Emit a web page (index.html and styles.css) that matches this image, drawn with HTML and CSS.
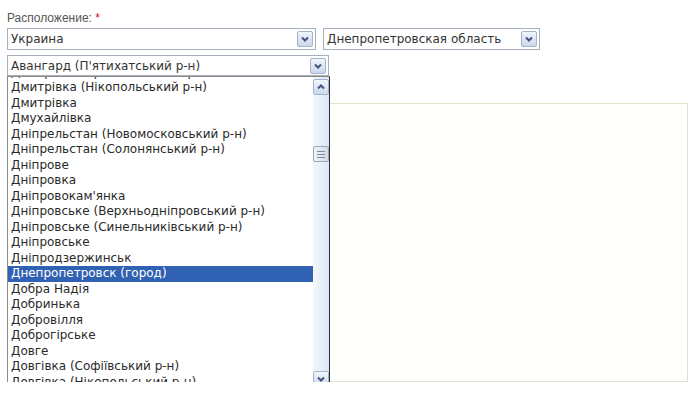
FILE: index.html
```html
<!DOCTYPE html>
<html lang="ru">

<head>
    <meta charset="UTF-8">
    <meta name="viewport" content="width=device-width, initial-scale=1.0">
    <title>Расположение</title>
    <link rel="stylesheet" href="styles.css">
</head>

<body>
    <div class="form">
        <div class="label">Расположение: <span class="req">*</span></div>
        <div class="row">
            <div class="combo combo-country">
                <span class="combo-text">Украина</span>
                <span class="arrow"><svg viewBox="0 0 14 14"><path d="M4 5.5 L7 8.5 L10 5.5" /></svg></span>
            </div>
            <div class="combo combo-region">
                <span class="combo-text">Днепропетровская область</span>
                <span class="arrow"><svg viewBox="0 0 14 14"><path d="M4 5.5 L7 8.5 L10 5.5" /></svg></span>
            </div>
        </div>
        <div class="combo combo-city">
            <span class="combo-text">Авангард (П'ятихатський р-н)</span>
            <span class="arrow"><svg viewBox="0 0 14 14"><path d="M4 5.5 L7 8.5 L10 5.5" /></svg></span>
        </div>
        <div class="area">
            <div class="map-box"></div>
            <div class="dropdown">
                <div class="items">
                    <div class="items-inner">
                        <div class="item">Дмитрівка (Криничанський р-н)</div>
                        <div class="item">Дмитрівка (Нікопольський р-н)</div>
                        <div class="item">Дмитрівка</div>
                        <div class="item">Дмухайлівка</div>
                        <div class="item">Дніпрельстан (Новомосковський р-н)</div>
                        <div class="item">Дніпрельстан (Солонянський р-н)</div>
                        <div class="item">Дніпрове</div>
                        <div class="item">Дніпровка</div>
                        <div class="item">Дніпровокам'янка</div>
                        <div class="item">Дніпровське (Верхньодніпровський р-н)</div>
                        <div class="item">Дніпровське (Синельниківський р-н)</div>
                        <div class="item">Дніпровське</div>
                        <div class="item">Дніпродзержинськ</div>
                        <div class="item selected">Днепропетровск (город)</div>
                        <div class="item">Добра Надія</div>
                        <div class="item">Добринька</div>
                        <div class="item">Добровілля</div>
                        <div class="item">Доброгірське</div>
                        <div class="item">Довге</div>
                        <div class="item">Довгівка (Софіївський р-н)</div>
                        <div class="item">Довгівка (Нікопольський р-н)</div>
                    </div>
                </div>
                <div class="scrollbar">
                    <span class="sbtn"><svg viewBox="0 0 14 14"><path d="M4 8.5 L7 5.5 L10 8.5" /></svg></span>
                    <div class="track">
                        <span class="thumb"><i></i><i></i><i></i></span>
                    </div>
                    <span class="sbtn"><svg viewBox="0 0 14 14"><path d="M4 5.5 L7 8.5 L10 5.5" /></svg></span>
                </div>
            </div>
        </div>
    </div>
</body>

</html>
```

FILE: styles.css
```css
* {
    box-sizing: border-box;
}

body {
    margin: 0;
    padding: 0;
    background-color: #ffffff;
    font-family: "DejaVu Sans", Verdana, sans-serif;
    font-size: 12px;
    color: #333333;
}

.form {
    padding: 11px 0 0 7px;
}

.label {
    font-family: "Liberation Sans", Arial, sans-serif;
    font-size: 12px;
    line-height: 14px;
    height: 14px;
    margin-bottom: 3px;
    color: #555555;
}

.req {
    color: #d01010;
}

.row {
    display: flex;
    gap: 7px;
    margin-bottom: 5px;
}

.combo {
    display: flex;
    align-items: center;
    justify-content: space-between;
    height: 22px;
    padding: 0 2px 0 3px;
    border: 1px solid #a7b1bd;
    background: #ffffff;
}

.combo-country {
    width: 309px;
}

.combo-region {
    width: 217px;
}

.combo-city {
    width: 322px;
    height: 21px;
}

.combo-text {
    white-space: nowrap;
}

.arrow,
.sbtn {
    display: flex;
    align-items: center;
    justify-content: center;
    width: 16px;
    height: 16px;
    border: 1px solid #a3b3cc;
    border-radius: 2px;
    background: linear-gradient(180deg, #f2f6fc, #c9d7ee);
}

.arrow svg,
.sbtn svg {
    width: 14px;
    height: 14px;
}

.arrow path,
.sbtn path {
    fill: none;
    stroke: #44557a;
    stroke-width: 2;
}

.area {
    position: relative;
    padding-top: 27px;
}

.map-box {
    margin-left: 313px;
    width: 368px;
    height: 279px;
    border: 1px solid #e2e2cc;
    background: #fffffd;
}

.dropdown {
    position: absolute;
    top: 0;
    left: 0;
    display: flex;
    width: 323px;
    height: 312px;
    border: 1px solid #8a8a8a;
    border-right-color: #2e2e2e;
    border-bottom-color: #2e2e2e;
    background: #ffffff;
}

.items {
    flex: 1;
    overflow: hidden;
}

.items-inner {
    margin-top: -12.5px;
}

.item {
    height: 15.5px;
    line-height: 15.5px;
    padding-left: 3px;
    white-space: nowrap;
    color: #2a2a2a;
}

.item.selected {
    background: #3161b3;
    color: #ffffff;
}

.scrollbar {
    display: flex;
    flex-direction: column;
    width: 16px;
    padding-top: 2px;
    background: linear-gradient(90deg, #f5f8fc, #dae6f8);
}

.track {
    flex: 1;
}

.thumb {
    display: flex;
    flex-direction: column;
    align-items: center;
    justify-content: center;
    gap: 2px;
    width: 16px;
    height: 16px;
    margin-top: 51px;
    border: 1px solid #9aa8bd;
    border-radius: 2px;
    background: linear-gradient(90deg, #f2f4f8, #d4dbe6);
}

.thumb i {
    display: block;
    width: 8px;
    height: 1px;
    background: #7d8aa0;
}
```
